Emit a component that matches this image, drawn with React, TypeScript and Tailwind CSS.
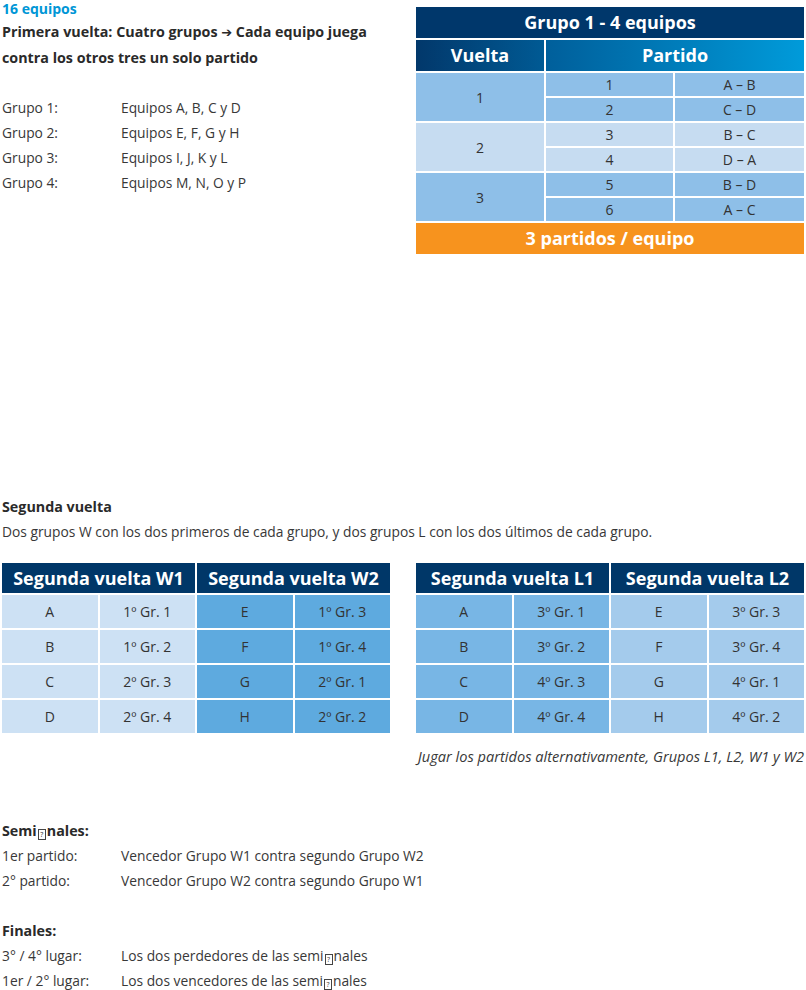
import React from "react";

const font = { fontFamily: '"Open Sans", "Noto Sans", sans-serif' };

function MissingGlyph() {
  return (
    <span className="mx-[1px] inline-flex h-[11px] w-[8px] items-center justify-center border border-[#444] align-[-1px] text-[7px] leading-none font-normal">
      ?
    </span>
  );
}

function GroupTable() {
  const rows = [
    { v: "1", bg: "bg-[#8ebfe8]", items: [["1", "A – B"], ["2", "C – D"]] },
    { v: "2", bg: "bg-[#c6dcf1]", items: [["3", "B – C"], ["4", "D – A"]] },
    { v: "3", bg: "bg-[#8ebfe8]", items: [["5", "B – D"], ["6", "A – C"]] },
  ];
  return (
    <div className="mt-[7px] w-[388px] text-[#333]">
      <div className="flex h-[31px] items-center justify-center bg-[#00376b] text-[18px] font-bold text-white">
        Grupo 1 - 4 equipos
      </div>
      <div className="mt-[2px] grid h-[31px] grid-cols-[128px_1fr] gap-[2px] text-[18px] font-bold text-white">
        <div className="flex items-center justify-center bg-gradient-to-r from-[#02386b] to-[#005a94]">Vuelta</div>
        <div className="flex items-center justify-center bg-gradient-to-r from-[#005f9b] to-[#009bda]">Partido</div>
      </div>
      <div className="mt-[2px] flex flex-col gap-[2px]">
        {rows.map((r) => (
          <div key={r.v} className="grid grid-cols-[128px_127px_1fr] gap-[2px] text-[14px]">
            <div className={`row-span-2 flex items-center justify-center ${r.bg}`}>{r.v}</div>
            {r.items.map(([n, m]) => (
              <React.Fragment key={n}>
                <div className={`flex h-[23px] items-center justify-center ${r.bg}`}>{n}</div>
                <div className={`flex h-[23px] items-center justify-center ${r.bg}`}>{m}</div>
              </React.Fragment>
            ))}
          </div>
        ))}
      </div>
      <div className="mt-[2px] flex h-[31px] items-center justify-center bg-[#f7931e] text-[18px] font-bold text-white">
        3 partidos / equipo
      </div>
    </div>
  );
}

type Half = { title: string; bg: string; rows: string[][] };

function SecondTable({ left, right }: { left: Half; right: Half }) {
  return (
    <div className="w-[388px] text-[#333]">
      <div className="grid h-[30px] grid-cols-2 gap-[2px] text-[18px] font-bold text-white">
        <div className="flex items-center justify-center bg-[#003768]">{left.title}</div>
        <div className="flex items-center justify-center bg-[#003768]">{right.title}</div>
      </div>
      <div className="mt-[2px] flex flex-col gap-[2px] text-[14px]">
        {left.rows.map((lr, i) => (
          <div key={i} className="grid h-[33px] grid-cols-4 gap-[2px]">
            <div className={`flex items-center justify-center ${left.bg}`}>{lr[0]}</div>
            <div className={`flex items-center justify-center ${left.bg}`}>{lr[1]}</div>
            <div className={`flex items-center justify-center ${right.bg}`}>{right.rows[i][0]}</div>
            <div className={`flex items-center justify-center ${right.bg}`}>{right.rows[i][1]}</div>
          </div>
        ))}
      </div>
    </div>
  );
}

export default function App() {
  return (
    <div style={font} className="h-[990px] w-[806px] overflow-hidden bg-white px-[2px] text-[13.8px] text-[#383838]">
      <div className="flex items-start justify-between">
        <div className="leading-[25px]">
          <div className="text-[14px] leading-[17px] font-bold text-[#0096d6]">16 equipos</div>
          <div className="mt-[2px] text-[14.3px] font-bold text-[#2a2a2a]">
            Primera vuelta: Cuatro grupos{" "}
            <span style={{ fontFamily: '"DejaVu Sans", sans-serif' }} className="text-[13px]">➔</span> Cada equipo juega
          </div>
          <div className="text-[14.3px] font-bold text-[#2a2a2a]">contra los otros tres un solo partido</div>
          <div className="h-[25px]" />
          {[
            ["Grupo 1:", "Equipos A, B, C y D"],
            ["Grupo 2:", "Equipos E, F, G y H"],
            ["Grupo 3:", "Equipos I, J, K y L"],
            ["Grupo 4:", "Equipos M, N, O y P"],
          ].map(([a, b]) => (
            <div key={a} className="grid grid-cols-[119px_1fr]">
              <span>{a}</span>
              <span>{b}</span>
            </div>
          ))}
        </div>
        <GroupTable />
      </div>

      <div className="mt-[240px] leading-[25px]">
        <div className="text-[14.3px] font-bold text-[#2a2a2a]">Segunda vuelta</div>
        <div>Dos grupos W con los dos primeros de cada grupo, y dos grupos L con los dos últimos de cada grupo.</div>
      </div>

      <div className="mt-[19px] flex justify-between">
        <SecondTable
          left={{ title: "Segunda vuelta W1", bg: "bg-[#cde1f4]", rows: [["A", "1º Gr. 1"], ["B", "1º Gr. 2"], ["C", "2º Gr. 3"], ["D", "2º Gr. 4"]] }}
          right={{ title: "Segunda vuelta W2", bg: "bg-[#5eaadf]", rows: [["E", "1º Gr. 3"], ["F", "1º Gr. 4"], ["G", "2º Gr. 1"], ["H", "2º Gr. 2"]] }}
        />
        <SecondTable
          left={{ title: "Segunda vuelta L1", bg: "bg-[#78b6e5]", rows: [["A", "3º Gr. 1"], ["B", "3º Gr. 2"], ["C", "4º Gr. 3"], ["D", "4º Gr. 4"]] }}
          right={{ title: "Segunda vuelta L2", bg: "bg-[#a4cbec]", rows: [["E", "3º Gr. 3"], ["F", "3º Gr. 4"], ["G", "4º Gr. 1"], ["H", "4º Gr. 2"]] }}
        />
      </div>

      <div className="mt-[11px] text-right text-[14.6px] leading-[25px] italic">
        Jugar los partidos alternativamente, Grupos L1, L2, W1 y W2
      </div>

      <div className="mt-[49px] leading-[25px]">
        <div className="text-[14.3px] font-bold text-[#2a2a2a]">
          Semi<MissingGlyph />nales:
        </div>
        <div className="grid grid-cols-[119px_1fr]">
          <span>1er partido:</span>
          <span>Vencedor Grupo W1 contra segundo Grupo W2</span>
        </div>
        <div className="grid grid-cols-[119px_1fr]">
          <span>2° partido:</span>
          <span>Vencedor Grupo W2 contra segundo Grupo W1</span>
        </div>
        <div className="h-[25px]" />
        <div className="text-[14.3px] font-bold text-[#2a2a2a]">Finales:</div>
        <div className="grid grid-cols-[119px_1fr]">
          <span>3° / 4° lugar:</span>
          <span>
            Los dos perdedores de las semi<MissingGlyph />nales
          </span>
        </div>
        <div className="grid grid-cols-[119px_1fr]">
          <span>1er / 2° lugar:</span>
          <span>
            Los dos vencedores de las semi<MissingGlyph />nales
          </span>
        </div>
      </div>
    </div>
  );
}
